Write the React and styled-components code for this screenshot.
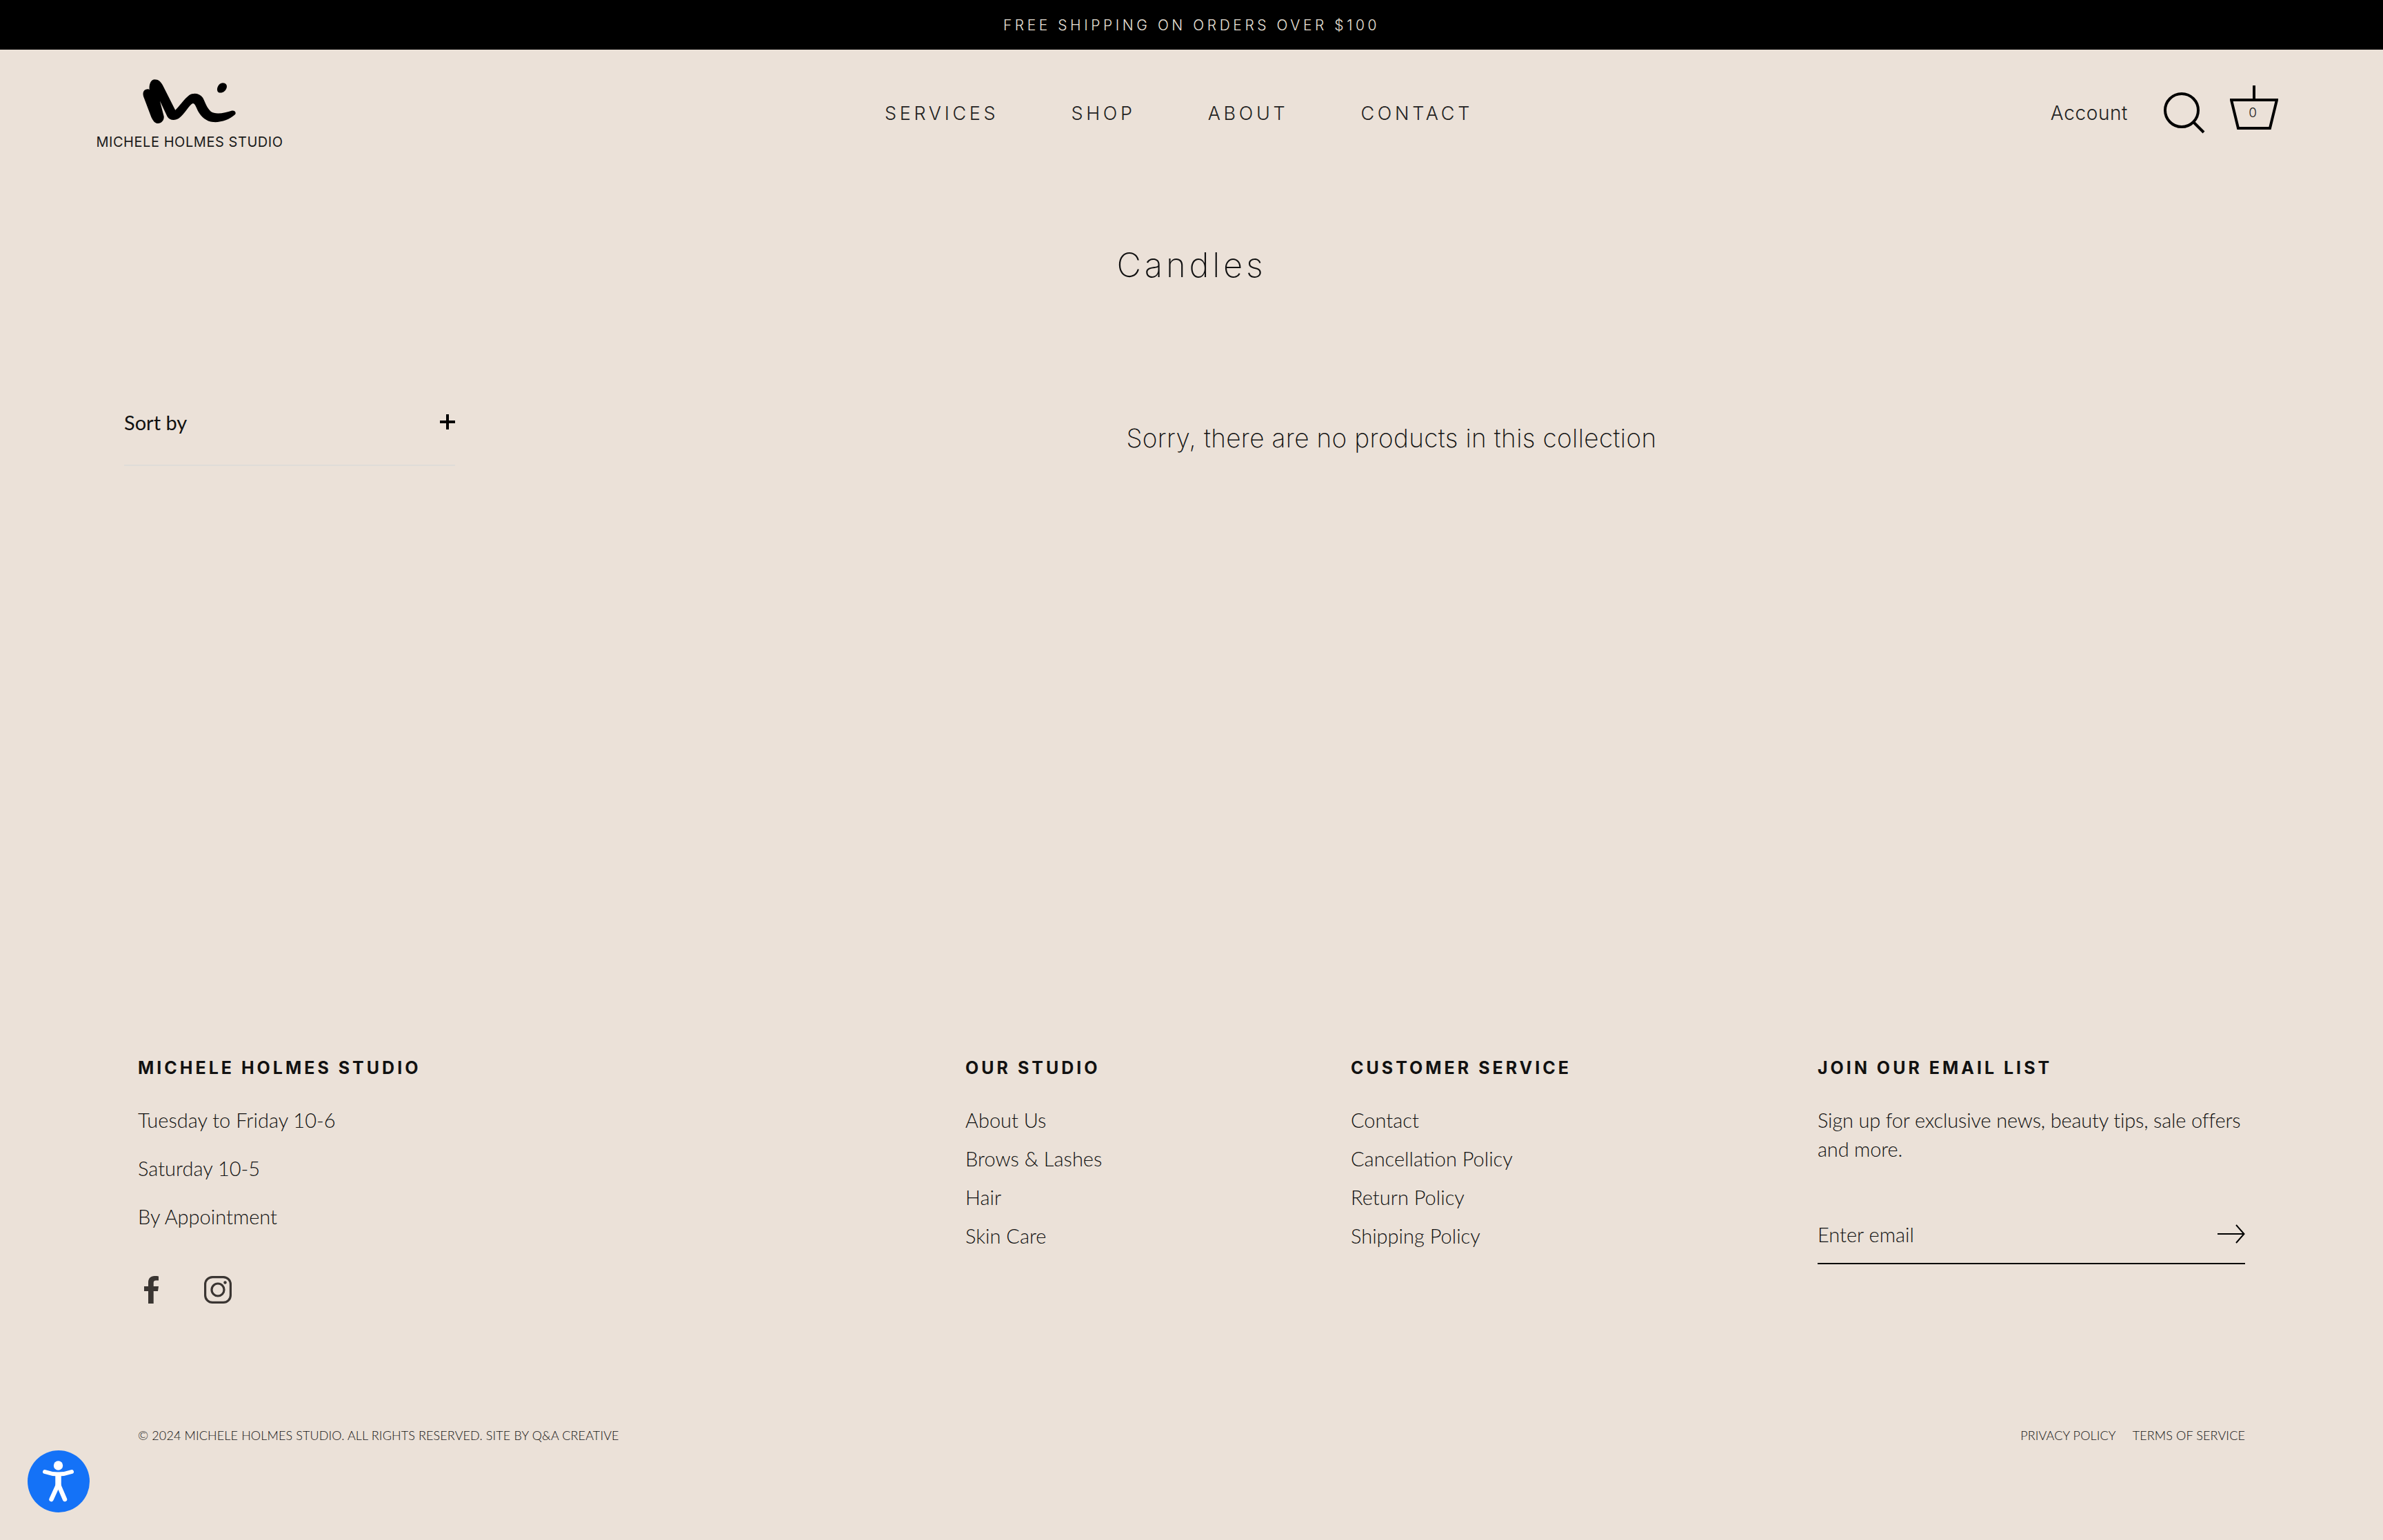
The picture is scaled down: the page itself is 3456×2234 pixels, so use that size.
import React from 'react'
import styled, { createGlobalStyle } from 'styled-components'

const sans = `"Lato", "Open Sans", sans-serif`
const wide = `"Inter", "Liberation Sans", sans-serif`

const GlobalStyle = createGlobalStyle`
  html, body {
    margin: 0;
    padding: 0;
    background: #ebe1d8;
  }
  * {
    box-sizing: border-box;
  }
`

const Page = styled.div`
  position: relative;
  display: flex;
  flex-direction: column;
  height: 2234px;
  background: #ebe1d8;
  color: #111;
  font-family: ${sans};
`

const AnnouncementBar = styled.div`
  height: 72px;
  display: flex;
  align-items: center;
  justify-content: center;
  background: #000;
  color: #e8e0d8;
  font-family: ${wide};
  font-size: 21px;
  font-weight: 300;
  letter-spacing: 4.55px;
`

const Header = styled.header`
  display: grid;
  grid-template-columns: 1fr auto 1fr;
  align-items: center;
  height: 184px;
  padding: 0 152px 0 139px;
`

const Logo = styled.a`
  display: flex;
  flex-direction: column;
  align-items: center;
  width: 272px;
  gap: 13px;
  margin-top: 3px;
`

const LogoName = styled.span`
  font-family: ${wide};
  font-size: 20px;
  font-weight: 400;
  white-space: nowrap;
  letter-spacing: 0.55px;
  color: #1a1a1a;
`

const Nav = styled.nav`
  display: flex;
  gap: 105px;
  margin-right: 24px;
`

const NavLink = styled.a`
  font-family: ${wide};
  font-size: 27px;
  font-weight: 300;
  letter-spacing: 4.7px;
  color: #222;
`

const HeaderActions = styled.div`
  display: flex;
  align-items: center;
  justify-content: flex-end;
`

const AccountLink = styled.a`
  font-family: ${wide};
  font-size: 28px;
  font-weight: 300;
  letter-spacing: 0.6px;
  color: #222;
  margin-right: 52px;
`

const Cart = styled.div`
  position: relative;
  width: 70px;
  height: 64px;
  margin-left: 36px;
  margin-top: -16px;
`

const CartCount = styled.span`
  position: absolute;
  left: 0;
  right: 4px;
  top: 28px;
  text-align: center;
  font-family: ${wide};
  font-size: 19px;
  font-weight: 300;
  color: #222;
`

const PageTitle = styled.h1`
  margin: 0;
  padding-top: 96px;
  height: 284px;
  text-align: center;
  font-family: ${wide};
  font-size: 49px;
  line-height: 66px;
  font-weight: 250;
  letter-spacing: 4.8px;
  color: #111;
`

const Collection = styled.div`
  display: grid;
  grid-template-columns: 480px 1fr;
  padding: 0 180px;
  height: 992px;
`

const Sidebar = styled.aside`
  display: block;
`

const SortRow = styled.div`
  display: flex;
  align-items: center;
  justify-content: space-between;
  height: 136px;
  padding-top: 12px;
  padding-bottom: 2px;
  border-bottom: 2px solid #dfdcd8;
`

const SortLabel = styled.span`
  font-size: 29px;
  font-weight: 400;
  color: #111;
`

const EmptyMessage = styled.p`
  margin: 0 0 0 100px;
  padding: 72px 0 0 0;
  text-align: center;
  font-family: ${wide};
  font-size: 37px;
  line-height: 48px;
  font-weight: 250;
  letter-spacing: 0.33px;
  color: #111;
`

const Footer = styled.footer`
  padding: 0 200px;
  flex: 1;
  display: flex;
  flex-direction: column;
`

const FooterColumns = styled.div`
  display: grid;
  grid-template-columns: 1200px 559px 677px 1fr;
  height: 538px;
`

const FooterColumn = styled.div`
  display: flex;
  flex-direction: column;
`

const ColumnHeading = styled.h4`
  margin: 0 0 38px;
  font-family: ${wide};
  font-size: 25px;
  line-height: 34px;
  font-weight: 700;
  letter-spacing: 4px;
  text-transform: uppercase;
  color: #111;
`

const HoursLine = styled.div`
  font-size: 29px;
  font-weight: 300;
  line-height: 42px;
  margin-bottom: 28px;
  color: #111;
`

const FooterLink = styled.a`
  font-size: 29px;
  font-weight: 300;
  line-height: 42px;
  margin-bottom: 14px;
  color: #111;
`

const SocialRow = styled.div`
  display: flex;
  align-items: center;
  gap: 65px;
  margin-top: 37px;
  padding-left: 9px;
`

const SignupText = styled.p`
  margin: 0;
  font-size: 29px;
  font-weight: 300;
  line-height: 42px;
  letter-spacing: -0.18px;
  white-space: nowrap;
  color: #111;
`

const EmailField = styled.div`
  display: flex;
  align-items: center;
  justify-content: space-between;
  width: 620px;
  height: 80px;
  margin-top: 66px;
  padding-bottom: 6px;
  border-bottom: 2px solid #000;
`

const EmailPlaceholder = styled.span`
  font-size: 29px;
  font-weight: 300;
  color: #111;
`

const LegalBar = styled.div`
  display: flex;
  justify-content: space-between;
  font-size: 18px;
  font-weight: 300;
  line-height: 24px;
  letter-spacing: 0.12px;
  color: #111;
`

const LegalLinks = styled.div`
  display: flex;
  gap: 24px;
`

const AccessibilityButton = styled.button`
  position: absolute;
  left: 40px;
  bottom: 40px;
  width: 90px;
  height: 90px;
  padding: 0;
  border: 0;
  border-radius: 50%;
  background: #1472f7;
  display: flex;
  align-items: center;
  justify-content: center;
`

const LogoMark = () => (
  <svg width="138" height="67" viewBox="320 135 415 200" fill="#000">
    <path d="M375 138 C392 138 402 148 410 163 L465 272 C480 258 505 222 525 207 C545 195 570 198 585 218 C597 240 602 262 620 278 C640 292 680 285 712 274 C725 272 732 282 726 291 C700 315 665 326 630 324 C600 322 578 300 565 278 C555 258 550 240 540 243 C525 250 505 290 480 308 C460 320 440 316 430 300 L398 232 L415 298 C418 315 405 330 390 330 C375 330 368 318 360 302 L330 222 C322 205 322 188 335 182 C345 178 350 180 352 183 C350 160 358 138 375 138 Z" />
    <path d="M672 153 C685 153 692 162 689 174 C685 188 672 198 658 196 C648 194 645 182 650 170 C655 160 662 153 672 153 Z" />
  </svg>
)

const SearchIcon = () => (
  <svg width="60" height="60" viewBox="0 0 60 60" fill="none" stroke="#000" strokeWidth="4">
    <circle cx="26" cy="26" r="24" />
    <path d="M43 43 L58 58" />
  </svg>
)

const CartIcon = () => (
  <svg width="70" height="64" viewBox="0 0 70 64" fill="none" stroke="#000" strokeWidth="4">
    <path d="M35 0 V21" />
    <path d="M2 21 H68 L58 62 H12 Z" />
  </svg>
)

const FacebookIcon = () => (
  <svg width="22" height="40" viewBox="0 0 22 40" fill="#3a3532">
    <path d="M6 40 V22 H0 V15 H6 V9.5 C6 3.5 9.5 0 15 0 C17.5 0 19.5 .2 21 .4 V6.6 H17.3 C14.5 6.6 13.7 8 13.7 10 V15 H21 L20 22 H13.7 V40 Z" />
  </svg>
)

const InstagramIcon = () => (
  <svg width="40" height="40" viewBox="0 0 40 40" fill="none" stroke="#3a3532" strokeWidth="3.2">
    <rect x="1.6" y="1.6" width="36.8" height="36.8" rx="10.5" />
    <circle cx="20" cy="20" r="9" />
    <circle cx="30.5" cy="9.5" r="2.2" fill="#3a3532" stroke="none" />
  </svg>
)

const ArrowIcon = () => (
  <svg width="40" height="28" viewBox="0 0 40 28" fill="none" stroke="#000" strokeWidth="2">
    <path d="M0 14 H38" />
    <path d="M27 1 L38.5 14 L27 27" />
  </svg>
)

const PlusIcon = () => (
  <svg width="22" height="22" viewBox="0 0 22 22" fill="#000">
    <path d="M9 0 H13 V9 H22 V13 H13 V22 H9 V13 H0 V9 H9 Z" />
  </svg>
)

const AccessibilityIcon = () => (
  <svg width="90" height="90" viewBox="0 0 90 90" fill="none" stroke="#fff" strokeLinecap="round" strokeLinejoin="round">
    <circle cx="44.5" cy="22" r="6.7" fill="#fff" stroke="none" />
    <path d="M25 31 Q44.5 38 64 31" strokeWidth="6" />
    <path d="M44.5 36 V50" strokeWidth="8.5" />
    <path d="M44 50 L34.5 71 M45 50 L54 71" strokeWidth="6.5" />
  </svg>
)

const studioLinks = ['About Us', 'Brows & Lashes', 'Hair', 'Skin Care']
const serviceLinks = ['Contact', 'Cancellation Policy', 'Return Policy', 'Shipping Policy']
const hours = ['Tuesday to Friday 10-6', 'Saturday 10-5', 'By Appointment']

const App = () => (
  <Page>
    <GlobalStyle />
    <AnnouncementBar>FREE SHIPPING ON ORDERS OVER $100</AnnouncementBar>
    <Header>
      <Logo>
        <LogoMark />
        <LogoName>MICHELE HOLMES STUDIO</LogoName>
      </Logo>
      <Nav>
        <NavLink>SERVICES</NavLink>
        <NavLink>SHOP</NavLink>
        <NavLink>ABOUT</NavLink>
        <NavLink>CONTACT</NavLink>
      </Nav>
      <HeaderActions>
        <AccountLink>Account</AccountLink>
        <SearchIcon />
        <Cart>
          <CartIcon />
          <CartCount>0</CartCount>
        </Cart>
      </HeaderActions>
    </Header>
    <PageTitle>Candles</PageTitle>
    <Collection>
      <Sidebar>
        <SortRow>
          <SortLabel>Sort by</SortLabel>
          <PlusIcon />
        </SortRow>
      </Sidebar>
      <EmptyMessage>Sorry, there are no products in this collection</EmptyMessage>
    </Collection>
    <Footer>
      <FooterColumns>
        <FooterColumn>
          <ColumnHeading>Michele Holmes Studio</ColumnHeading>
          {hours.map((line) => (
            <HoursLine key={line}>{line}</HoursLine>
          ))}
          <SocialRow>
            <FacebookIcon />
            <InstagramIcon />
          </SocialRow>
        </FooterColumn>
        <FooterColumn>
          <ColumnHeading>Our Studio</ColumnHeading>
          {studioLinks.map((link) => (
            <FooterLink key={link}>{link}</FooterLink>
          ))}
        </FooterColumn>
        <FooterColumn>
          <ColumnHeading>Customer Service</ColumnHeading>
          {serviceLinks.map((link) => (
            <FooterLink key={link}>{link}</FooterLink>
          ))}
        </FooterColumn>
        <FooterColumn>
          <ColumnHeading>Join Our Email List</ColumnHeading>
          <SignupText>
            Sign up for exclusive news, beauty tips, sale offers
            <br />
            and more.
          </SignupText>
          <EmailField>
            <EmailPlaceholder>Enter email</EmailPlaceholder>
            <ArrowIcon />
          </EmailField>
        </FooterColumn>
      </FooterColumns>
      <LegalBar>
        <span>© 2024 MICHELE HOLMES STUDIO. ALL RIGHTS RESERVED. SITE BY Q&amp;A CREATIVE</span>
        <LegalLinks>
          <span>PRIVACY POLICY</span>
          <span>TERMS OF SERVICE</span>
        </LegalLinks>
      </LegalBar>
    </Footer>
    <AccessibilityButton aria-label="Accessibility">
      <AccessibilityIcon />
    </AccessibilityButton>
  </Page>
)

export default App
